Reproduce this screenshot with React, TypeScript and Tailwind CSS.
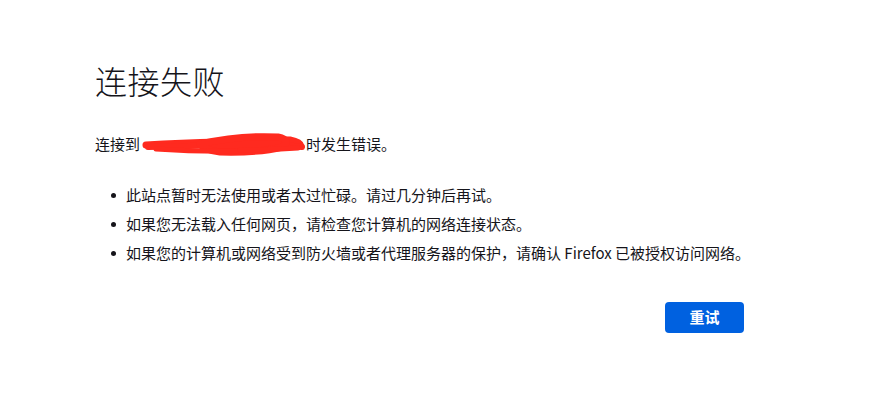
import React from "react";

const font = { fontFamily: '"Noto Sans CJK SC", "Noto Sans", sans-serif' };

function Dot() {
  return <span className="shrink-0 w-[5px] h-[5px] rounded-full bg-[#15141a] ml-[16px] mr-[10px]" />;
}

export default function App() {
  return (
    <div className="w-[889px] h-[408px] bg-white text-[#15141a] overflow-hidden" style={font}>
      <div className="ml-[95px] w-[650px] pt-[58px] flex flex-col">
        <h1 className="text-[32px] leading-[44px] font-light tracking-[0.5px]">连接失败</h1>
        <p className="mt-[30px] text-[15px] leading-[24px] flex items-center">
          <span>连接到</span>
          <span className="relative inline-block w-[166px] h-[24px]">
            <span className="absolute left-[8px] top-[8px] text-[#8a8a8a] text-[9px] leading-[9px] tracking-[1px]">···</span>
            <svg className="absolute left-0 top-0" width="166" height="24" viewBox="0 0 166 24">
              <g stroke="#ff2a1f" strokeLinecap="round" strokeLinejoin="round" fill="none">
                <path d="M6 13 Q40 11 80 10 Q120 7 150 8 Q160 10 161 14" strokeWidth="7" />
                <path d="M8 15 Q60 14 100 12 Q140 12 162 15" strokeWidth="6" />
                <path d="M60 12 Q100 3 138 5 Q152 8 142 15 Q120 21 80 20 Q64 18 60 12" strokeWidth="7" fill="#ff2a1f" />
                <path d="M16 17 Q60 20 100 19" strokeWidth="5" />
                <path d="M100 18 Q130 18 158 16" strokeWidth="5" />
              </g>
            </svg>
          </span>
          <span>时发生错误。</span>
        </p>
        <ul className="mt-[27px] flex flex-col gap-[5px] text-[15px] leading-[24px] whitespace-nowrap">
          <li className="flex items-center">
            <Dot />
            此站点暂时无法使用或者太过忙碌。请过几分钟后再试。
          </li>
          <li className="flex items-center">
            <Dot />
            如果您无法载入任何网页，请检查您计算机的网络连接状态。
          </li>
          <li className="flex items-center">
            <Dot />
            如果您的计算机或网络受到防火墙或者代理服务器的保护，请确认 Firefox 已被授权访问网络。
          </li>
        </ul>
        <div className="mt-[37px] flex justify-end pr-[1px]">
          <button className="w-[79px] h-[31px] rounded-[4px] bg-[#0061e0] text-white text-[15px] font-bold">
            重试
          </button>
        </div>
      </div>
    </div>
  );
}
